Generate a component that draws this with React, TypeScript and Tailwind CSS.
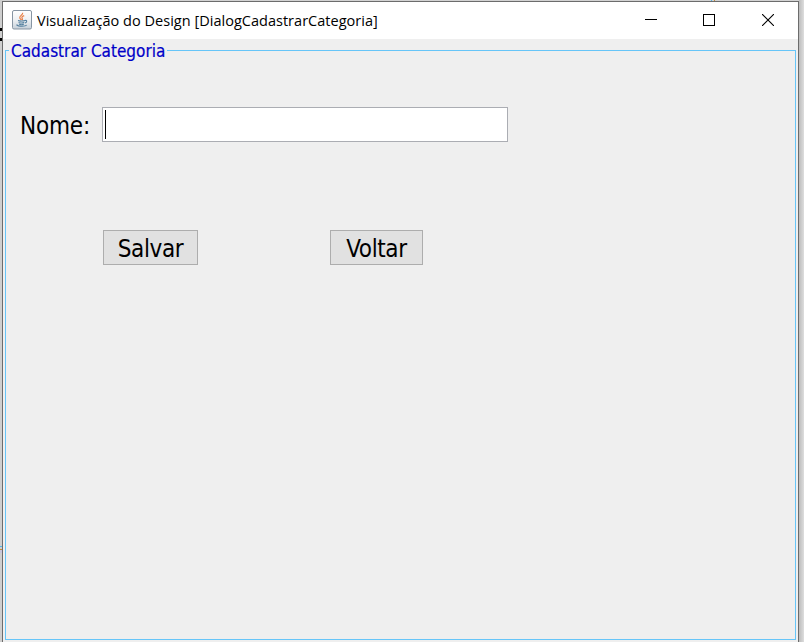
import React from "react";

function JavaIcon() {
  return (
    <svg width="20" height="20" viewBox="0 0 20 20" className="shrink-0">
      <defs>
        <linearGradient id="tile" x1="0" y1="0" x2="0" y2="1">
          <stop offset="0" stopColor="#ffffff" />
          <stop offset="0.5" stopColor="#eef1f4" />
          <stop offset="1" stopColor="#c6d0d9" />
        </linearGradient>
      </defs>
      <rect x="0.5" y="0.5" width="19" height="18.5" rx="1.5" fill="url(#tile)" stroke="#8795a3" />
      <path d="M10.6 2.8C11.4 4.8 7.2 5.6 7.8 7.8C8 8.7 9 9.2 9.2 10M12.2 5.6C9.6 6.6 9.5 7.6 10.3 8.5C10.8 9.2 10.4 9.7 10 10.2" fill="none" stroke="#e8824a" strokeWidth="1.2" />
      <path d="M6 10.6C7.5 11.3 11.5 11.2 13 10.5M6.6 12.5C8.4 13.2 10.8 13.1 12.2 12.6M7.2 14.2C8.6 14.8 10.6 14.7 11.8 14.2M13 10.5C15.4 9.8 15.2 12.3 12.9 13M5.4 14.5C2.6 16.3 13.2 17 14.8 15" fill="none" stroke="#55809f" strokeWidth="1.1" />
    </svg>
  );
}

function WindowControls() {
  return (
    <div className="ml-auto mr-[24px] flex h-[36px] items-center">
      <svg width="12" height="12" shapeRendering="crispEdges"><path d="M0 5.5H12" stroke="#000" /></svg>
      <svg width="12" height="12" shapeRendering="crispEdges" className="ml-[46px]"><rect x="0.5" y="0.5" width="11" height="11" fill="none" stroke="#000" /></svg>
      <svg width="12" height="12" className="ml-[47px]"><path d="M0 0L12 12M12 0L0 12" stroke="#000" strokeWidth="1.1" /></svg>
    </div>
  );
}

function DialogButton({ label, className }: { label: string; className: string }) {
  return (
    <button className={`flex h-[35px] items-center justify-center border border-[#adadad] bg-[#e1e1e1] pt-[2px] text-[24px] leading-none tracking-[-0.4px] text-black ${className}`}>
      {label}
    </button>
  );
}

export default function App() {
  return (
    <div className="flex h-[642px] w-[804px] overflow-hidden bg-[#d9d9d9]">
      <div className="flex w-[2px] shrink-0 flex-col bg-[#cfcfcf]">
        <div className="mt-7 h-[3px] bg-black" />
        <div className="mt-[7px] h-[3px] bg-black" />
        <div className="mt-[505px] h-px bg-[#55b4e4]" />
        <div className="mt-[2px] h-px bg-[#c38b3a]" />
        <div className="h-[3px] bg-[#c9c5dc]" />
      </div>
      <div className="flex w-[797px] shrink-0 flex-col">
        <div className="flex h-px justify-end gap-[2px] bg-[#d2d2d2] pr-[84px]">
          <div className="w-px bg-[#55b4e4]" />
          <div className="w-px bg-[#c38b3a]" />
        </div>
        <div className="flex h-[641px] flex-col border-x border-t border-[#6c6c6c] bg-[#efefef] font-['DejaVu_Sans_Condensed','DejaVu_Sans',sans-serif]">
          <header className="flex h-[37px] shrink-0 items-start bg-white pl-[9px]">
            <div className="flex h-[36px] items-center">
              <JavaIcon />
              <span className="ml-[5px] whitespace-nowrap pt-px font-['Open_Sans','Noto_Sans',sans-serif] text-[14.5px] tracking-[0.02px] text-black">
                Visualização do Design [DialogCadastrarCategoria]
              </span>
            </div>
            <WindowControls />
          </header>
          <fieldset className="ml-[2px] mt-[2px] h-[599px] w-[791px] shrink-0 border border-[#66c5f8]">
            <legend className="ml-[3px] h-[19px] whitespace-nowrap px-[2px] text-[17px] leading-[20px] text-[#0000c8] [-webkit-text-stroke:0.2px_#0000c8]">
              Cadastrar Categoria
            </legend>
            <div className="mt-[47px] flex h-[35px] items-center">
              <label className="ml-[14px] w-[82px] whitespace-nowrap pt-[2px] text-[24px] leading-none tracking-[-0.2px] text-black">Nome:</label>
              <div className="flex h-[35px] w-[406px] items-center border border-[#abadb3] bg-white pl-[2px]">
                <div className="h-[29px] w-px bg-black" />
              </div>
            </div>
            <div className="mt-[88px] flex pl-[97px]">
              <DialogButton label="Salvar" className="w-[95px]" />
              <DialogButton label="Voltar" className="ml-[132px] w-[93px]" />
            </div>
          </fieldset>
        </div>
      </div>
      <div className="w-[5px] bg-linear-to-r from-[#bcbcbc] to-[#dedede]" />
    </div>
  );
}
